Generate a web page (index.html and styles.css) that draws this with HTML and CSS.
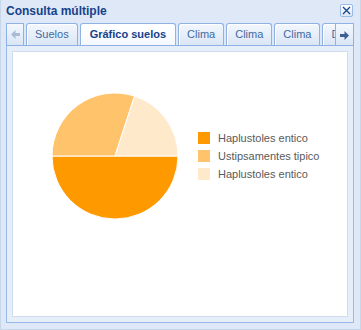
FILE: index.html
```html
<!DOCTYPE html>
<html lang="es">
<head>
    <meta charset="UTF-8">
    <title>Consulta múltiple</title>
    <link rel="stylesheet" href="styles.css">
</head>
<body>

<!-- Ventana -->
<div class="win">
    <div class="win-head">
        <span class="win-title">Consulta múltiple</span>
        <span class="win-close">
            <svg width="11" height="11" viewBox="0 0 11 11">
                <path d="M2 2 L9 9 M9 2 L2 9" stroke="#15428b" stroke-width="1.3" fill="none"/>
            </svg>
        </span>
    </div>

    <!-- Pestañas -->
    <div class="tabbar">
        <div class="scroller scroller-left">
            <svg width="9" height="9" viewBox="0 0 9 9">
                <path d="M0 4.5 L4.5 0 L4.5 3 L9 3 L9 6 L4.5 6 L4.5 9 Z" fill="#a9bcd6"/>
            </svg>
        </div>
        <ul class="tabs">
            <li class="tab">Suelos</li>
            <li class="tab active">Gráfico suelos</li>
            <li class="tab">Clima</li>
            <li class="tab">Clima</li>
            <li class="tab">Clima</li>
            <li class="tab">Datos</li>
        </ul>
        <div class="scroller scroller-right">
            <svg width="9" height="9" viewBox="0 0 9 9">
                <path d="M9 4.5 L4.5 0 L4.5 3 L0 3 L0 6 L4.5 6 L4.5 9 Z" fill="#3e5f93"/>
            </svg>
        </div>
    </div>

    <div class="win-body">
        <div class="panel">
            <div class="chart">
                <svg class="pie" width="128" height="128" viewBox="0 0 128 128">
                    <path d="M64 64 L127 64 A63 63 0 0 1 1 64 Z" fill="#ff9900" stroke="#fff" stroke-width="1"/>
                    <path d="M64 64 L1 64 A63 63 0 0 1 83.5 4.1 Z" fill="#ffc46b" stroke="#fff" stroke-width="1"/>
                    <path d="M64 64 L83.5 4.1 A63 63 0 0 1 127 64 Z" fill="#ffe9cb" stroke="#fff" stroke-width="1"/>
                </svg>
                <ul class="legend">
                    <li><span class="swatch dark"></span>Haplustoles entico</li>
                    <li><span class="swatch medium"></span>Ustipsamentes tipico</li>
                    <li><span class="swatch light"></span>Haplustoles entico</li>
                </ul>
            </div>
        </div>
    </div>
</div>

</body>
</html>
```

FILE: styles.css
```css
body {
    margin: 0;
    font-family: "Liberation Sans", Arial, sans-serif;
}

/* La ventana */
.win {
    width: 361px;
    height: 330px;
    box-sizing: border-box;
    background-color: #dfe8f6;
    border: 1px solid #c8d6ea;
    border-top: none;
}

.win-head {
    height: 23px;
    display: flex;
    align-items: center;
    justify-content: space-between;
    padding: 0 7px 0 5px;
}

.win-title {
    color: #15428b;
    font-weight: 700;
    font-size: 12px;
    margin-top: -2px;
}

.win-close {
    width: 13px;
    height: 13px;
    box-sizing: border-box;
    border: 1px solid #99bbe8;
    border-radius: 2px;
    background: linear-gradient(#ffffff, #dbe6f5);
    display: flex;
    align-items: center;
    justify-content: center;
    margin-top: -3px;
}

/* Pestañas */
.tabbar {
    display: flex;
    height: 22px;
    margin: 0 6px 0 5px;
    border-bottom: 1px solid #8db2e3;
}

.scroller {
    width: 18px;
    box-sizing: border-box;
    border: 1px solid #8db2e3;
    border-bottom: none;
    background: linear-gradient(#f4f8fd, #dae6f6);
    display: flex;
    align-items: center;
    justify-content: center;
    flex-shrink: 0;
}

.scroller-left {
    margin-right: 2px;
}

.scroller-right {
    width: 19px;
}

.scroller-right svg {
    margin-top: 2px;
}

.tabs {
    list-style: none;
    margin: 0;
    padding: 0;
    display: flex;
    gap: 2px;
    flex: 1;
    min-width: 0;
    overflow: hidden;
}

.tab {
    flex-shrink: 0;
    box-sizing: border-box;
    height: 22px;
    padding: 0 8px;
    border: 1px solid #8db2e3;
    border-bottom: none;
    border-radius: 3px 3px 0 0;
    background: linear-gradient(#f3f7fd, #dbe6f5);
    box-shadow: inset 1px 1px 0 #ffffff;
    color: #416aa3;
    font-size: 11px;
    line-height: 21px;
}

.tab.active {
    height: 23px;
    padding: 0 9px;
    background: linear-gradient(#ffffff, #f4f8fd);
    color: #15428b;
    font-weight: 700;
    font-size: 11px;
}

/* Cuerpo */
.win-body {
    margin: 0 6px 0 5px;
    height: 277px;
    box-sizing: border-box;
    border: 1px solid #99bbe8;
    border-top: none;
    background-color: #e6eef9;
    padding: 5px;
}

.panel {
    height: 100%;
    box-sizing: border-box;
    background-color: #fff;
    border: 1px solid #cfdcee;
}

.chart {
    display: flex;
    align-items: center;
    padding: 40px 0 0 38px;
}

.legend {
    list-style: none;
    margin: 0 0 0 19px;
    padding: 0;
    font-size: 11px;
    color: #5a5a5a;
}

.legend li {
    height: 18px;
    display: flex;
    align-items: center;
}

.swatch {
    width: 12px;
    height: 12px;
    margin-right: 8px;
}

.swatch.dark {
    background-color: #ff9900;
}

.swatch.medium {
    background-color: #ffc46b;
}

.swatch.light {
    background-color: #ffe9cb;
}
```
